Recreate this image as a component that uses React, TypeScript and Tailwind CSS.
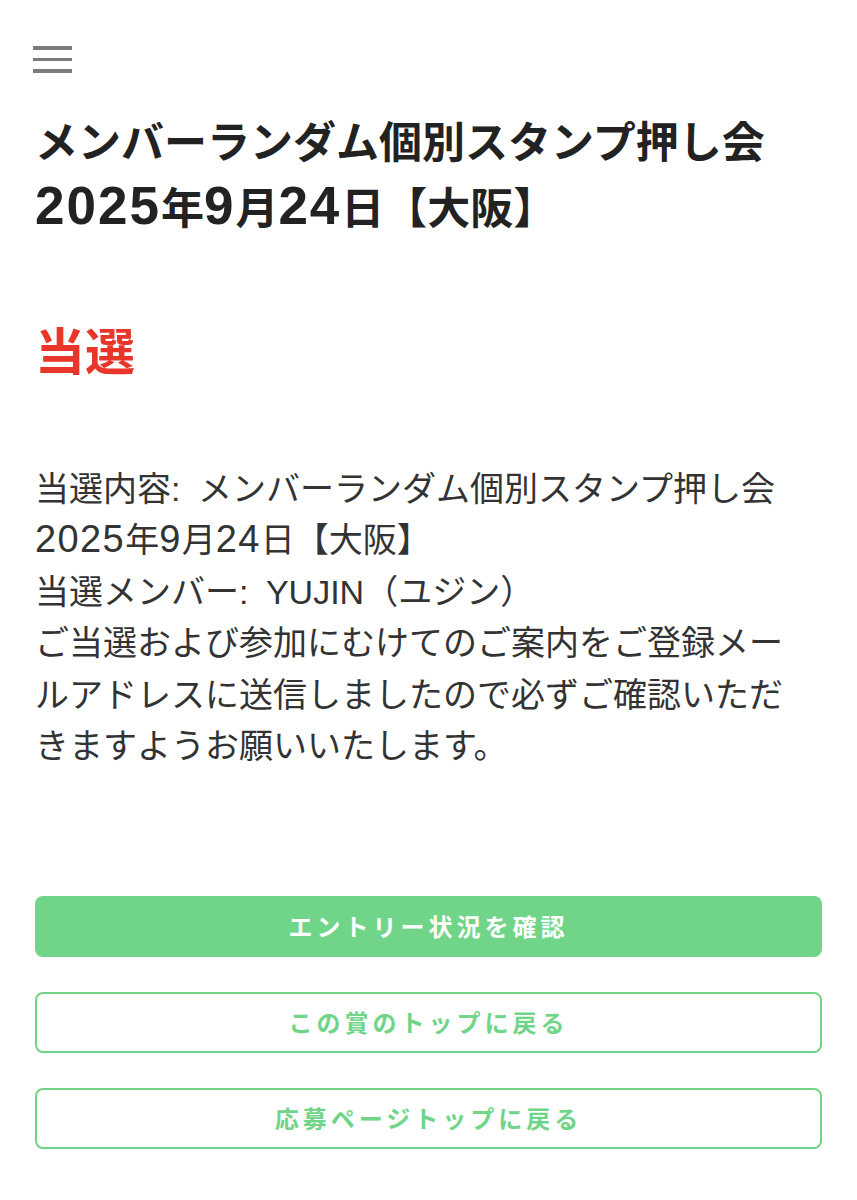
import React from "react";

const jp = { fontFamily: '"Noto Sans CJK JP", "Noto Sans", sans-serif' };

function TD({ children }: { children: React.ReactNode }) {
  return (
    <span className="font-['Liberation_Sans',sans-serif] text-[53px] leading-[0] tracking-[2px] font-bold">
      {children}
    </span>
  );
}

function BD({ children }: { children: React.ReactNode }) {
  return (
    <span className="font-['Liberation_Sans',sans-serif] text-[38px] leading-[0] tracking-[1.4px]">
      {children}
    </span>
  );
}

function BL({ children }: { children: React.ReactNode }) {
  return <span className="font-['Liberation_Sans',sans-serif] leading-[0]">{children}</span>;
}

export default function App() {
  return (
    <div
      className="min-h-[1200px] w-full bg-white px-[35px] pt-[46px] pb-[40px] [text-spacing-trim:space-all]"
      style={jp}
    >
      <div className="-ml-[2px] flex w-[39px] flex-col gap-[8px]">
        <div className="h-[3.5px] bg-[#7b7b7b]" />
        <div className="h-[3.5px] bg-[#7b7b7b]" />
        <div className="h-[3.5px] bg-[#7b7b7b]" />
      </div>

      <h1 className="mt-[33px] text-[43px] font-bold leading-[66px] text-[#222222] whitespace-nowrap">
        メンバーランダム個別スタンプ押し会
        <br />
        <TD>2025</TD>年<TD>9</TD>月<TD>24</TD>日【大阪】
      </h1>

      <div className="mt-[73px] text-[50px] font-bold leading-[75px] text-[#e8362b]">当選</div>

      <p className="mt-[75px] text-[34px] leading-[51.5px] text-[#333333] whitespace-nowrap">
        当選内容<BL><span className="tracking-[4px]">: </span></BL>メンバーランダム個別スタンプ押し会
        <br />
        <BD>2025</BD>年<BD>9</BD>月<BD>24</BD>日【大阪】
        <br />
        当選メンバー<BL><span className="tracking-[4px]">: </span>YUJIN</BL>（ユジン）
        <br />
        ご当選および参加にむけてのご案内をご登録メー
        <br />
        ルアドレスに送信しましたので必ずご確認いただ
        <br />
        きますようお願いいたします。
      </p>

      <div className="mt-[126px] flex flex-col gap-[35px]">
        <div className="flex h-[61px] items-center justify-center rounded-[8px] bg-[#70d589] text-[24px] font-bold tracking-[4px] text-white">
          エントリー状況を確認
        </div>
        <div className="flex h-[61px] items-center justify-center rounded-[8px] border-2 border-[#70d589] bg-white text-[24px] font-bold tracking-[4px] text-[#70d589]">
          この賞のトップに戻る
        </div>
        <div className="flex h-[61px] items-center justify-center rounded-[8px] border-2 border-[#70d589] bg-white text-[24px] font-bold tracking-[4px] text-[#70d589]">
          応募ページトップに戻る
        </div>
      </div>
    </div>
  );
}
